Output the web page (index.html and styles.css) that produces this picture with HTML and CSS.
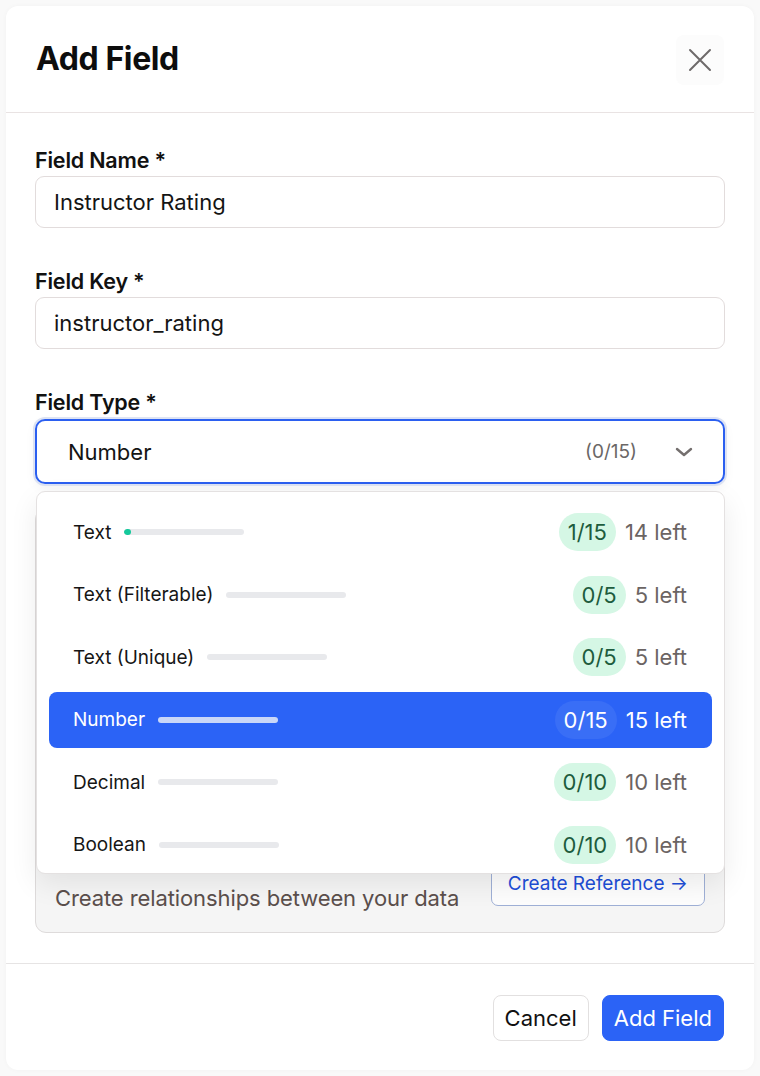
FILE: index.html
```html
<!DOCTYPE html>
<html lang="en">
<head>
<meta charset="utf-8">
<title>Add Field</title>
<link rel="stylesheet" href="styles.css">
</head>
<body>
<div class="modal">
  <header class="modal-header">
    <h1 class="modal-title">Add Field</h1>
    <button class="close-btn" aria-label="Close">
      <svg width="24" height="24" viewBox="0 0 24 24" fill="none" stroke="currentColor" stroke-width="2" stroke-linecap="round"><path d="M2 2L22 22M22 2L2 22"/></svg>
    </button>
  </header>

  <div class="modal-body">
    <div class="field">
      <label class="field-label">Field Name *</label>
      <div class="input">Instructor Rating</div>
    </div>

    <div class="field">
      <label class="field-label">Field Key *</label>
      <div class="input">instructor_rating</div>
    </div>

    <div class="field field-type">
      <label class="field-label">Field Type *</label>
      <div class="select-wrap">
        <div class="select">
          <span class="select-value">Number</span>
          <span class="select-count">(0/15)</span>
          <svg class="chevron" width="18" height="10" viewBox="0 0 18 10" fill="none" stroke="currentColor" stroke-width="2.4" stroke-linecap="round" stroke-linejoin="round"><path d="M2 2L9 8L16 2"/></svg>
        </div>

        <div class="dropdown">
          <div class="option">
            <div class="opt-left"><span class="opt-name">Text</span><span class="bar"><span class="bar-fill" style="width:7px"></span></span></div>
            <div class="opt-right"><span class="badge">1/15</span><span class="left">14 left</span></div>
          </div>
          <div class="option">
            <div class="opt-left"><span class="opt-name">Text (Filterable)</span><span class="bar"></span></div>
            <div class="opt-right"><span class="badge">0/5</span><span class="left">5 left</span></div>
          </div>
          <div class="option">
            <div class="opt-left"><span class="opt-name">Text (Unique)</span><span class="bar"></span></div>
            <div class="opt-right"><span class="badge">0/5</span><span class="left">5 left</span></div>
          </div>
          <div class="option option-active">
            <div class="opt-left"><span class="opt-name">Number</span><span class="bar"></span></div>
            <div class="opt-right"><span class="badge">0/15</span><span class="left">15 left</span></div>
          </div>
          <div class="option">
            <div class="opt-left"><span class="opt-name">Decimal</span><span class="bar"></span></div>
            <div class="opt-right"><span class="badge">0/10</span><span class="left">10 left</span></div>
          </div>
          <div class="option">
            <div class="opt-left"><span class="opt-name">Boolean</span><span class="bar"></span></div>
            <div class="opt-right"><span class="badge">0/10</span><span class="left">10 left</span></div>
          </div>
        </div>
      </div>
    </div>

    <div class="ref-card">
      <p class="ref-desc">Create relationships between your data</p>
      <button class="ref-btn">Create Reference →</button>
    </div>
  </div>

  <footer class="modal-footer">
    <button class="btn btn-secondary">Cancel</button>
    <button class="btn btn-primary">Add Field</button>
  </footer>
</div>
</body>
</html>
```

FILE: styles.css
```css
* { box-sizing: border-box; }

html, body {
  margin: 0;
  padding: 0;
}

body {
  background: #f9f9f9;
  font-family: Inter, "Noto Sans", "Liberation Sans", sans-serif;
  color: #111111;
}

.modal {
  margin: 6px;
  width: 748px;
  height: 1064px;
  background: #ffffff;
  border-radius: 12px;
  box-shadow: 0 0 5px rgba(0, 0, 0, 0.03);
  display: flex;
  flex-direction: column;
}

.modal-header {
  height: 107px;
  flex: 0 0 107px;
  padding: 0 30px;
  display: flex;
  align-items: center;
  justify-content: space-between;
  border-bottom: 1px solid #e9e3e3;
}

.modal-title {
  margin: 0;
  font-size: 32px;
  font-weight: 700;
  letter-spacing: -0.4px;
  line-height: 40px;
  color: #0d0d0d;
}

.close-btn {
  width: 48px;
  height: 50px;
  border: none;
  border-radius: 8px;
  background: #fcfcfc;
  color: #6e6a6a;
  display: flex;
  align-items: center;
  justify-content: center;
  padding: 0;
  margin-top: 2px;
}

.modal-body {
  flex: 1;
  padding: 35px 29px 30px 29px;
  display: flex;
  flex-direction: column;
}

.field {
  margin-bottom: 41px;
}

.field-type {
  margin-bottom: 24px;
}

.field-label {
  display: block;
  font-size: 21.5px;
  font-weight: 600;
  letter-spacing: -0.2px;
  line-height: 24px;
  margin-bottom: 4px;
  color: #111111;
}

.input {
  height: 52px;
  border: 1px solid #e2dcdc;
  border-radius: 9px;
  padding: 0 18px;
  display: flex;
  align-items: center;
  font-size: 22px;
  color: #141414;
  background: #ffffff;
}

.select-wrap {
  position: relative;
}

.select {
  height: 65px;
  border: 2.5px solid #2b5ff0;
  border-radius: 10px;
  box-shadow: 0 0 0 2px #dde3f3, 0 4px 12px rgba(0,0,0,0.05);
  padding: 0 30px 0 31px;
  display: flex;
  align-items: center;
  font-size: 22px;
  margin-top: 5px;
}

.select-value {
  flex: 1;
  color: #141414;
}

.select-count {
  font-size: 19px;
  color: #6b6766;
  margin-right: 38px;
}

.chevron {
  color: #746f6e;
}

.dropdown {
  position: absolute;
  top: calc(100% + 7px);
  left: 1px;
  right: 0;
  height: 383px;
  overflow: hidden;
  background: #ffffff;
  border: 1px solid #e4e1e1;
  border-radius: 9px;
  box-shadow: 0 10px 28px rgba(0, 0, 0, 0.08);
  padding: 12px;
  display: flex;
  flex-direction: column;
  gap: 6.5px;
  z-index: 5;
}

.option {
  flex: 0 0 56px;
  height: 56px;
  border-radius: 8px;
  padding: 0 25px 0 24px;
  display: flex;
  align-items: center;
  justify-content: space-between;
}

.opt-left {
  display: flex;
  align-items: center;
  gap: 13px;
}

.opt-name {
  font-size: 19px;
  color: #161616;
}

.bar {
  width: 120px;
  height: 6px;
  border-radius: 3px;
  background: #e8e9ec;
  display: block;
  overflow: hidden;
}

.bar-fill {
  display: block;
  height: 100%;
  border-radius: 3px;
  background: #14c99b;
}

.opt-right {
  display: flex;
  align-items: center;
  gap: 9px;
}

.badge {
  height: 38px;
  padding: 0 9px;
  border-radius: 19px;
  background: #d5f7e5;
  color: #1d5c3d;
  font-size: 22px;
  display: flex;
  align-items: center;
}

.left {
  font-size: 22px;
  color: #6b6463;
}

.option-active {
  background: #2b63f6;
}

.option-active .opt-name {
  color: #ffffff;
}

.option-active .bar {
  background: #c9d7f8;
}

.option-active .badge {
  background: rgba(255, 255, 255, 0.07);
  color: #ffffff;
}

.option-active .left {
  color: #ffffff;
}

.ref-card {
  flex: 1;
  background: #f5f5f5;
  border: 1px solid #dedbdb;
  border-radius: 11px;
  padding: 0 19px 21px 19px;
  display: flex;
  align-items: flex-end;
  justify-content: space-between;
}

.ref-desc {
  margin: 0;
  font-size: 22px;
  line-height: 26px;
  letter-spacing: -0.1px;
  color: #5b4f4c;
}

.ref-btn {
  height: 46px;
  padding: 0 16px;
  margin-bottom: 5px;
  border: 1px solid #9fb0d6;
  border-radius: 7px;
  background: #fdfdfd;
  color: #1d4fd8;
  font-family: inherit;
  font-size: 19px;
}

.modal-footer {
  flex: 0 0 auto;
  border-top: 1px solid #e6e4e4;
  padding: 31px 30px 29px 30px;
  display: flex;
  justify-content: flex-end;
  gap: 13px;
}

.btn {
  height: 46px;
  border-radius: 8px;
  font-family: inherit;
  font-size: 22px;
  padding: 0 11px;
}

.btn-secondary {
  background: #ffffff;
  border: 1px solid #e2e0e0;
  color: #111111;
}

.btn-primary {
  background: #2b63f6;
  border: 1px solid #2b63f6;
  color: #ffffff;
}
```
